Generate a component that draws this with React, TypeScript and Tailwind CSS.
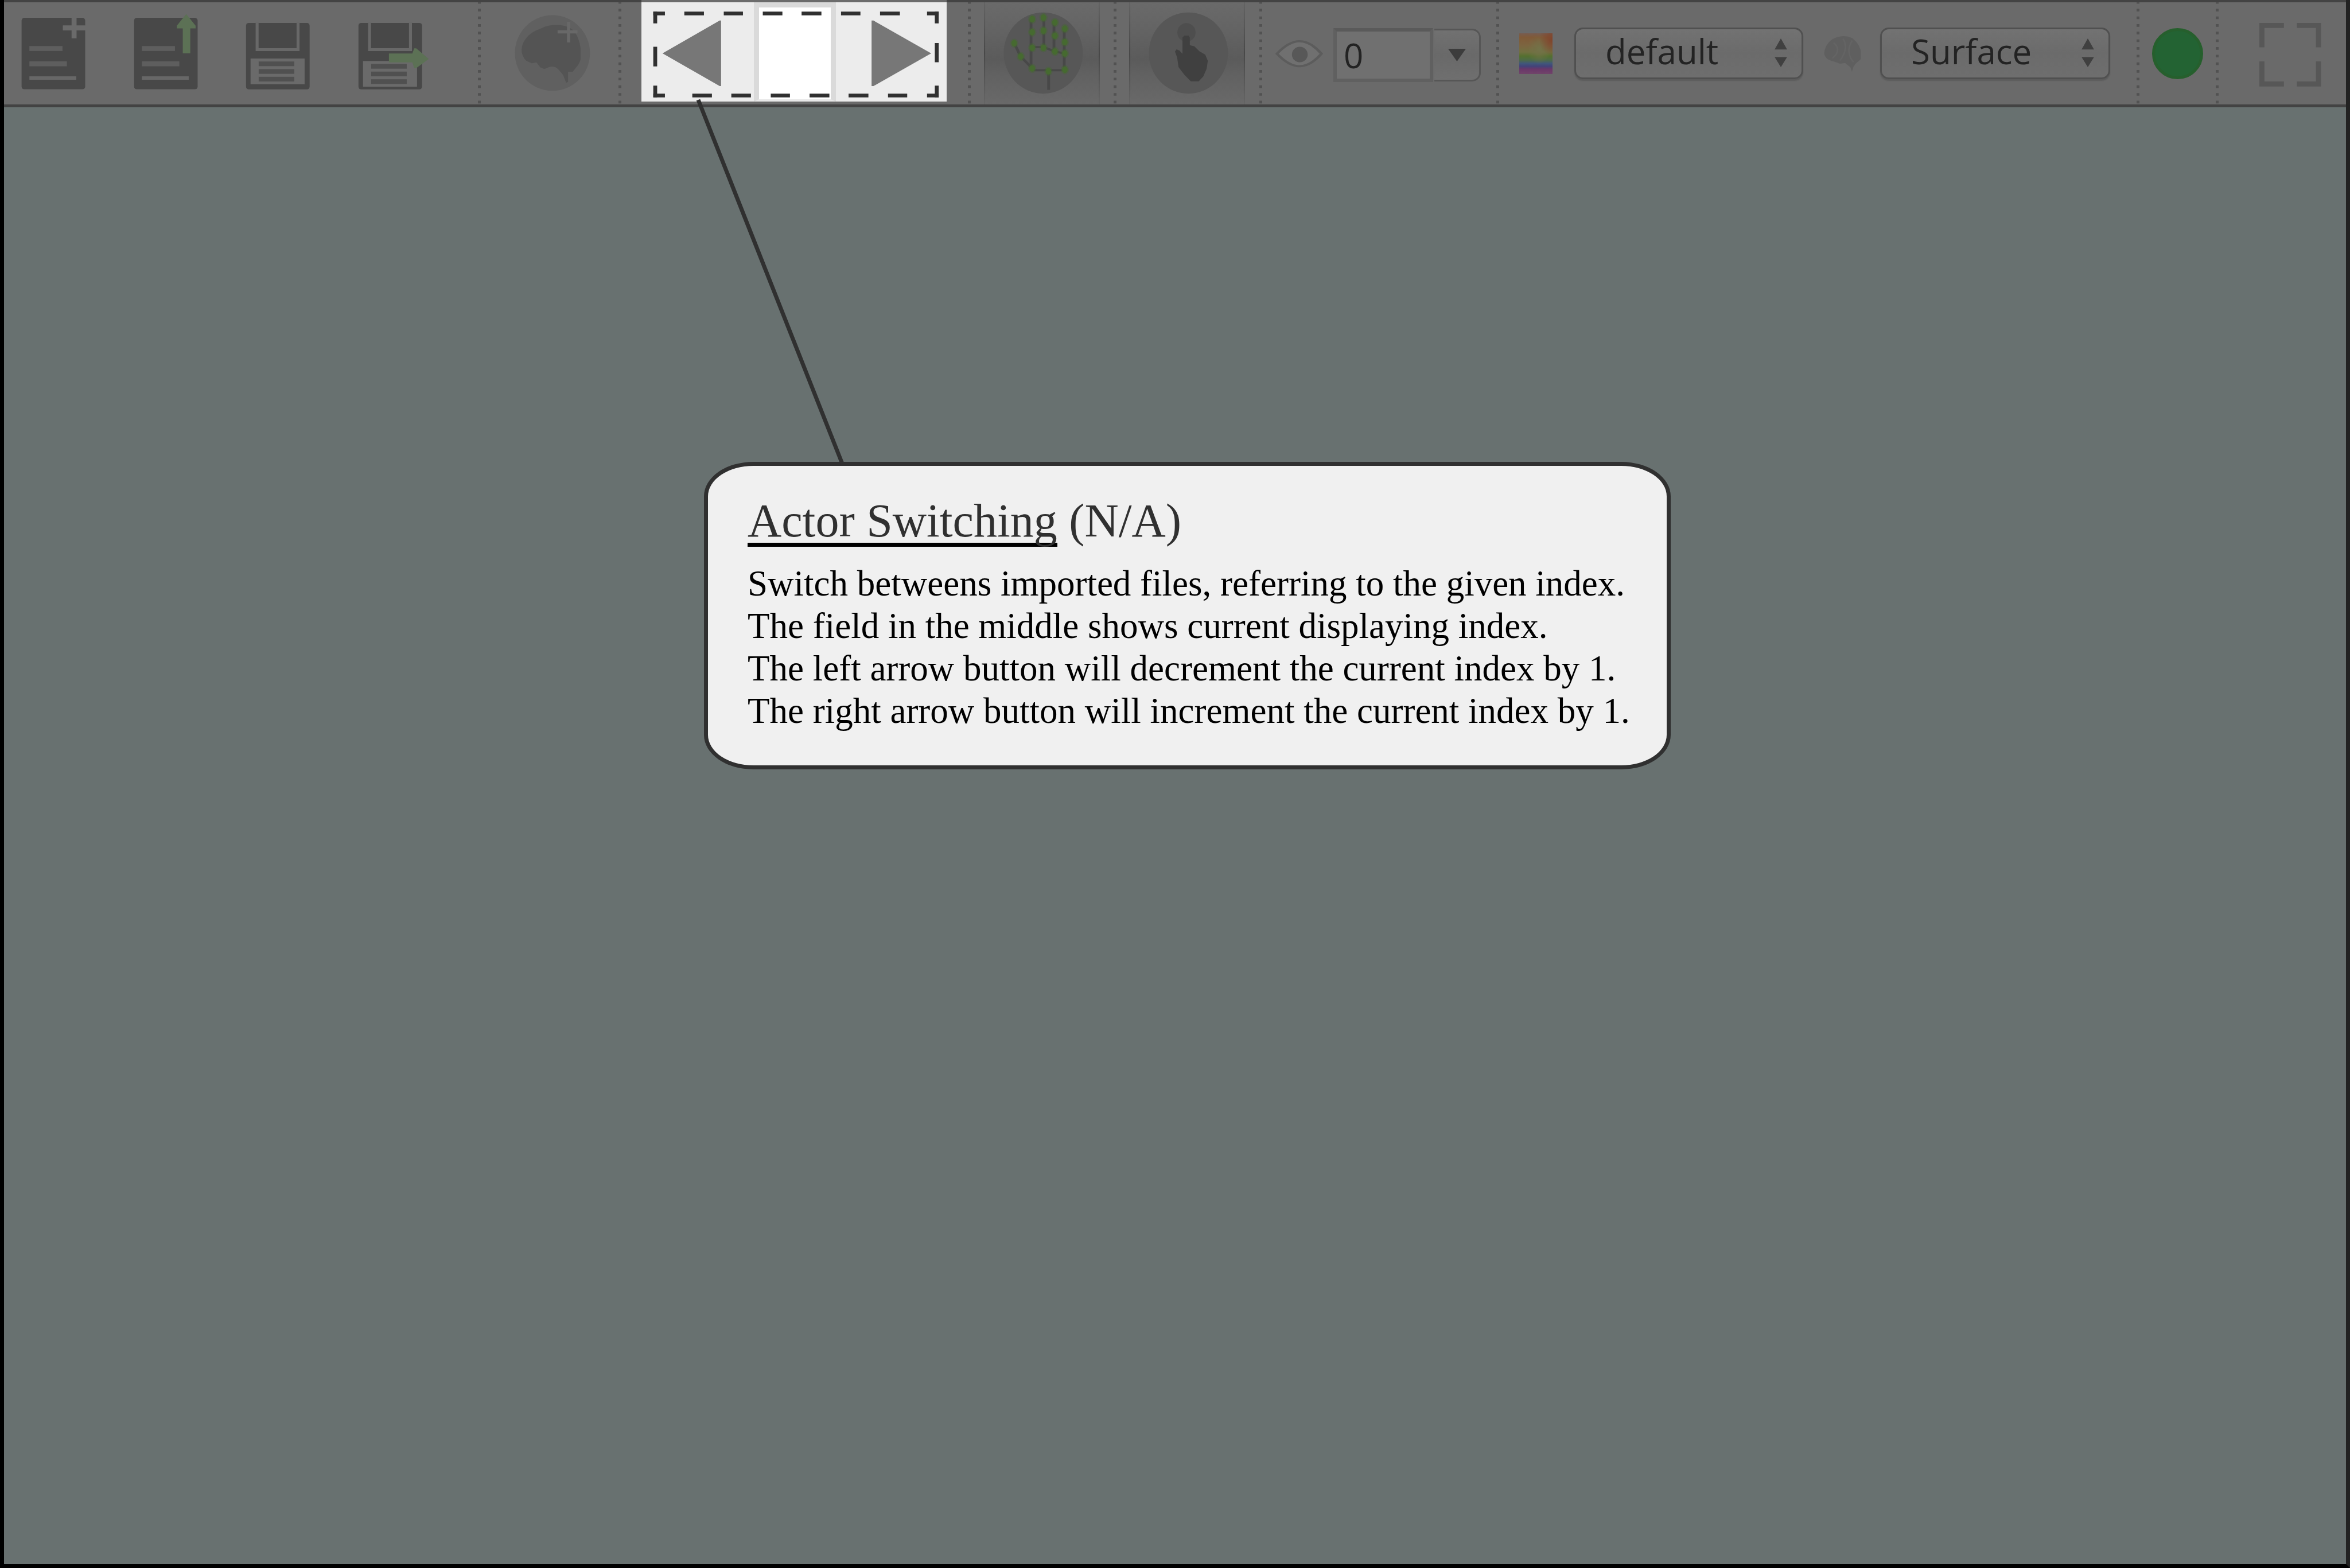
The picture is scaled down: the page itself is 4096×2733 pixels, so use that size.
import React from 'react';

type CellProps = {
  label: string;
  box: string;
  size: string;
  children: React.ReactNode;
};

function IconButton({ label, box, size, children }: CellProps) {
  return (
    <button type="button" aria-label={label} className={`block shrink-0 ${size}`}>
      <svg viewBox={box} preserveAspectRatio="none" className="block h-full w-full">
        {children}
      </svg>
    </button>
  );
}

function Separator({ className }: { className: string }) {
  return (
    <svg viewBox="0 5 6 218" preserveAspectRatio="none" className={`block h-[178px] w-[5px] shrink-0 ${className}`}>
      <line x1="3" y1="2.5" x2="3" y2="223" stroke="#525252" strokeWidth="6" strokeDasharray="5.7 10.65" />
    </svg>
  );
}

function DocumentShape() {
  return (
    <>
      <rect x="138" y="114" width="407" height="458" rx="18" fill="#484848" />
      <g fill="#5e5e5e">
        <rect x="188" y="295" width="212" height="32" />
        <rect x="188" y="393" width="240" height="32" />
        <rect x="188" y="489" width="300" height="22" fill="#676767" />
      </g>
    </>
  );
}

function FloppyShape({ shift }: { shift: number }) {
  return (
    <>
      <rect x="135" y="147" width="407" height="426" rx="18" fill="#484848" />
      <path d="M206 143 V318 H468 V143" fill="none" stroke="#686868" strokeWidth="19" />
      <rect x="164" y={375 + shift} width="346" height={165} fill="#6a6a6a" />
      <g fill="#505050">
        <rect x="216" y={394 + shift} width="228" height="30" />
        <rect x="216" y={443 + shift} width="228" height="30" />
        <rect x="216" y={492 + shift} width="228" height="30" />
      </g>
    </>
  );
}

function PressedBackground({ id, x }: { id: string; x: number }) {
  return (
    <>
      <defs>
        <linearGradient id={`${id}-face`} x1="0" y1="0" x2="0" y2="1">
          <stop offset="0" stopColor="#6a6a6a" />
          <stop offset="0.25" stopColor="#646464" />
          <stop offset="0.45" stopColor="#5e5e5e" />
          <stop offset="0.56" stopColor="#5b5b5b" />
          <stop offset="0.7" stopColor="#616161" />
          <stop offset="1" stopColor="#696969" />
        </linearGradient>
        <linearGradient id={`${id}-edge`} x1="0" y1="0" x2="0" y2="1">
          <stop offset="0" stopColor="#636363" />
          <stop offset="0.5" stopColor="#484848" />
          <stop offset="1" stopColor="#656565" />
        </linearGradient>
      </defs>
      <rect x={x} y="15" width="586" height="654" fill={`url(#${id}-face)`} />
      <rect x={x} y="15" width="6" height="654" fill={`url(#${id}-edge)`} />
      <rect x={x + 580} y="15" width="6" height="654" fill={`url(#${id}-edge)`} />
    </>
  );
}

const joints: [number, number][] = [
  [378, 123], [435, 113], [493, 144], [543, 184],
  [378, 206], [435, 197], [493, 229], [543, 270],
  [378, 306], [435, 306], [493, 330], [543, 343],
  [287, 277], [320, 362], [378, 438], [460, 457], [543, 447],
];

function PopupSelect({ label, value, className }: { label: string; value: string; className: string }) {
  return (
    <div className={`relative shrink-0 ${className}`}>
      <select
        aria-label={label}
        defaultValue={value}
        className="block h-[90px] w-full appearance-none rounded-[15px] border-[3px] border-[#505050] bg-linear-to-b from-[#727272] via-[#6b6b6b] to-[#6e6e6e] pb-[8px] pl-[51px] font-['Open_Sans',sans-serif] text-[60px] leading-[76px] font-medium text-[#232323] shadow-[0_3px_2px_#5c5c5c]"
      >
        <option>{value}</option>
      </select>
      <svg viewBox="0 0 26 60" className="pointer-events-none absolute top-[19px] right-[28px] h-[50px] w-[22px]">
        <path d="M13 0 L26 23 H0 Z M0 39 H26 L13 60 Z" fill="#404040" />
      </svg>
    </div>
  );
}

function Toolbar() {
  return (
    <header className="flex h-[187px] items-center border-t-[4px] border-b-[5px] border-[#434343] bg-[#6a6a6a] pl-[29px]">
      <div className="flex items-center gap-[83px]">
        <IconButton label="New file" box="132 15 415 654" size="h-[178px] w-[113px]">
          <DocumentShape />
          <path d="M474 114 V246 M402 179 H547" stroke="#6a6a6a" strokeWidth="32" fill="none" />
        </IconButton>
        <IconButton label="Open file" box="132 15 415 654" size="h-[178px] w-[113px]">
          <DocumentShape />
          <path d="M450 342 V182 H412 V165 L472 90 L532 165 V182 H498 V342 Z" fill="#5c7155" />
        </IconButton>
        <IconButton label="Save" box="132 15 415 654" size="h-[178px] w-[113px]">
          <FloppyShape shift={0} />
        </IconButton>
        <IconButton label="Save as" box="132 15 463 654" size="h-[178px] w-[126px]">
          <FloppyShape shift={16} />
          <path d="M330 343 H480 L492 310 H505 L585 378 L505 437 H492 L480 400 H330 Z" fill="#5c7155" />
        </IconButton>
      </div>
      <Separator className="ml-[83px]" />
      <div className="ml-[57px]">
        <IconButton label="Add brain" box="343 15 499 654" size="h-[178px] w-[136px]">
          <ellipse cx="592" cy="340" rx="240" ry="242" fill="#606060" />
          <path
            d="M395 320 Q395 285 420 250 Q450 205 520 182 Q560 160 620 160 Q700 162 735 205 Q765 250 772 310 V380 Q765 410 745 430 L722 460 H692 L692 525 L680 530 L660 480 L635 450 Q610 420 575 428 L540 442 L515 432 L490 400 L460 405 L425 390 Q395 360 395 320 Z"
            fill="#545454"
          />
          <path d="M695 140 V272 M625 204 H752" stroke="#686868" strokeWidth="20" fill="none" />
        </IconButton>
      </div>
      <Separator className="ml-[47px]" />

      <div className="relative z-10 mt-[-4px] ml-[35px] flex h-[177px] w-[532px] shrink-0 self-start border-t-[4px] border-[#6c6c6c] bg-[#ececec]">
        <IconButton label="Previous actor" box="1367 5 240 212" size="h-[173px] w-[196px]">
          <path d="M1412 114 L1534 44 H1537 V184 H1534 Z" fill="#777777" />
        </IconButton>
        <input
          aria-label="Actor index"
          defaultValue=""
          className="block h-[173px] w-[143px] shrink-0 border-x-[9px] border-t-[9px] border-b-[4px] border-[#dadada] border-b-[#e8e8e8] bg-white text-center font-['Open_Sans',sans-serif] text-[60px]"
        />
        <IconButton label="Next actor" box="1781 5 236 212" size="h-[173px] w-[193px]">
          <path d="M1984 114 L1861 44 H1857 V184 H1861 Z" fill="#777777" />
        </IconButton>
        <svg viewBox="58 15 1416 636" preserveAspectRatio="none" className="pointer-events-none absolute inset-0 h-full w-full">
          <g fill="none" stroke="#303030">
            <path
              strokeWidth="24"
              d="M113 87 H167 M257 87 H348 M440 87 H529 M621 87 H712 M801 87 H893 M984 87 H1074 M1165 87 H1257 M1383 87 H1437 M113 612 H167 M294 612 H385 M475 612 H566 M658 612 H747 M838 612 H930 M1019 612 H1111 M1202 612 H1291 M1383 612 H1437"
            />
            <path
              strokeWidth="18"
              d="M122 75 V150 M122 300 V426 M122 549 V624 M1428 75 V150 M1428 276 V399 M1428 549 V624"
            />
          </g>
        </svg>
      </div>

      <Separator className="ml-[37px]" />
      <div className="ml-[23px]">
        <IconButton label="Hand tracking" box="134 15 586 654" size="h-[178px] w-[202px]">
          <PressedBackground id="hand" x={134} />
          <ellipse cx="434" cy="340" rx="200" ry="260" fill="#575757" />
          <path
            d="M372 123 V438 M437 113 V306 M488 144 V330 M540 184 V447 M378 302 H435 L493 330 L543 343 M287 277 L320 362 L378 438 M378 450 H543 M461 457 V575"
            fill="none"
            stroke="#484848"
            strokeWidth="14"
          />
          {joints.map(([x, y]) => (
            <g key={`${x}-${y}`} fill="#466a30">
              <ellipse cx={x} cy={y} rx="21" ry="30" opacity="0.35" />
              <ellipse cx={x} cy={y} rx="14" ry="21" />
            </g>
          ))}
        </IconButton>
      </div>
      <Separator className="ml-[24px]" />
      <div className="ml-[22px]">
        <IconButton label="Touch" box="870 15 586 654" size="h-[178px] w-[202px]">
          <PressedBackground id="touch" x={870} />
          <ellipse cx="1170" cy="340" rx="200" ry="260" fill="#575757" />
          <ellipse cx="1160" cy="208" rx="46" ry="60" fill="#4e4e4e" />
          <path
            d="M1140 240 L1150 228 H1170 L1177 240 V290 L1200 297 L1225 328 L1255 350 L1268 390 L1262 440 L1245 490 L1222 521 H1182 L1150 480 L1120 430 L1113 370 L1102 330 L1110 316 L1125 325 L1140 345 Z"
            fill="#404040"
          />
        </IconButton>
      </div>
      <Separator className="ml-[25px]" />

      <svg viewBox="92 250 242 195" preserveAspectRatio="none" className="ml-[23px] block h-[53px] w-[83px] shrink-0">
        <path d="M100 348 Q160 268 215 268 Q270 268 326 348 Q270 428 215 428 Q160 428 100 348 Z" fill="#707070" stroke="#5c5c5c" strokeWidth="14" />
        <ellipse cx="216" cy="353" rx="40" ry="50" fill="#585858" />
      </svg>
      <div className="mt-[6px] ml-[18px] flex shrink-0 items-center">
        <input
          aria-label="Opacity"
          defaultValue="0"
          className="block h-[94px] w-[174px] border-[6px] border-[#606060] border-t-[#5a5a5a] bg-[#707070] pl-[12px] font-['Open_Sans',sans-serif] text-[60px] leading-[80px] font-medium text-[#232323]"
        />
        <button
          type="button"
          aria-label="Show values"
          className="ml-[2px] flex h-[92px] w-[81px] items-center justify-center rounded-r-[15px] border-[3px] border-l-0 border-[#565656] bg-linear-to-b from-[#717171] via-[#696969] to-[#6f6f6f]"
        >
          <svg viewBox="0 0 38 27" className="block h-[22px] w-[31px]">
            <path d="M0 0 H38 L19 27 Z" fill="#3c3c3c" />
          </svg>
        </button>
      </div>
      <Separator className="ml-[27px]" />

      <svg viewBox="0 0 160 260" preserveAspectRatio="none" className="ml-[35px] block h-[71px] w-[58px] shrink-0">
        <defs>
          <linearGradient id="spectrum" x1="0" y1="0" x2="0" y2="1">
            <stop offset="0" stopColor="#775c50" />
            <stop offset="0.1" stopColor="#805a38" />
            <stop offset="0.3" stopColor="#7c6540" />
            <stop offset="0.46" stopColor="#717040" />
            <stop offset="0.56" stopColor="#55702f" />
            <stop offset="0.66" stopColor="#4c6a48" />
            <stop offset="0.74" stopColor="#41577a" />
            <stop offset="0.81" stopColor="#434379" />
            <stop offset="0.88" stopColor="#6a3769" />
            <stop offset="1" stopColor="#70446a" />
          </linearGradient>
          <radialGradient id="glow" cx="0.6" cy="0.4" r="0.35">
            <stop offset="0" stopColor="#727248" />
            <stop offset="1" stopColor="#727248" stopOpacity="0" />
          </radialGradient>
          <radialGradient id="ember" cx="1" cy="0.15" r="0.4">
            <stop offset="0" stopColor="#80442c" />
            <stop offset="1" stopColor="#80442c" stopOpacity="0" />
          </radialGradient>
        </defs>
        <rect width="160" height="260" fill="url(#spectrum)" />
        <rect width="160" height="260" fill="url(#glow)" />
        <rect width="160" height="260" fill="url(#ember)" />
      </svg>
      <PopupSelect label="Colour map" value="default" className="ml-[38px] w-[399px]" />

      <svg viewBox="55 225 190 240" preserveAspectRatio="none" className="ml-[33px] block h-[65px] w-[69px] shrink-0">
        <path
          d="M65 340 Q68 290 100 255 Q150 215 200 245 Q240 290 241 340 V380 L215 410 L205 430 L198 460 L190 432 L165 405 L140 410 L110 395 Q65 380 65 340 Z"
          fill="#5f5f5f"
        />
        <path d="M110 275 Q150 320 105 375 M155 250 Q185 310 140 390 M200 260 Q165 330 205 400" fill="none" stroke="#646464" strokeWidth="8" />
      </svg>
      <PopupSelect label="Display mode" value="Surface" className="ml-[32px] w-[401px]" />

      <Separator className="ml-[46px]" />
      <div className="ml-[22px] h-[89px] w-[89px] shrink-0 rounded-full border-[5px] border-[#265f2d] bg-[#236333]" />
      <Separator className="ml-[22px]" />
      <div className="mr-[43px] ml-auto">
        <IconButton label="Full screen" box="940 15 398 654" size="h-[178px] w-[109px]">
          <path
            d="M960 303 V163 H1100 M1183 163 H1320 V303 M960 393 V538 H1100 M1183 538 H1320 V393"
            fill="none"
            stroke="#575757"
            strokeWidth="32"
          />
        </IconButton>
      </div>
    </header>
  );
}

export default function App() {
  return (
    <div className="relative flex min-h-screen flex-col border-r-[7px] border-b-[7px] border-l-[7px] border-black border-r-[#222222] bg-[#687170]">
      <Toolbar />
      <svg viewBox="0 0 260 640" className="pointer-events-none absolute top-[172px] left-[1205px] z-20 h-[640px] w-[260px]">
        <line x1="5" y1="2" x2="256" y2="636" stroke="#303030" strokeWidth="7" />
      </svg>
      <main className="flex-1 pt-[618px] pl-[1220px]">
        <section className="w-fit rounded-[86px/60px] border-[7px] border-[#303030] bg-[#f0f0f0] pt-[46px] pr-[64px] pb-[58px] pl-[69px] font-['Liberation_Serif',serif]">
          <h1 className="text-[82px] leading-[100px] text-[#303030]">
            <span className="inline-block border-b-[7px] border-black leading-[76px]">Actor Switching</span> (N/A)
          </h1>
          <p className="mt-[22px] text-[63px] leading-[74px] whitespace-nowrap text-black">
            Switch betweens imported files, referring to the given index.
            <br />
            The field in the middle shows current displaying index.
            <br />
            The left arrow button will decrement the current index by 1.
            <br />
            The right arrow button will increment the current index by 1.
          </p>
        </section>
      </main>
    </div>
  );
}
